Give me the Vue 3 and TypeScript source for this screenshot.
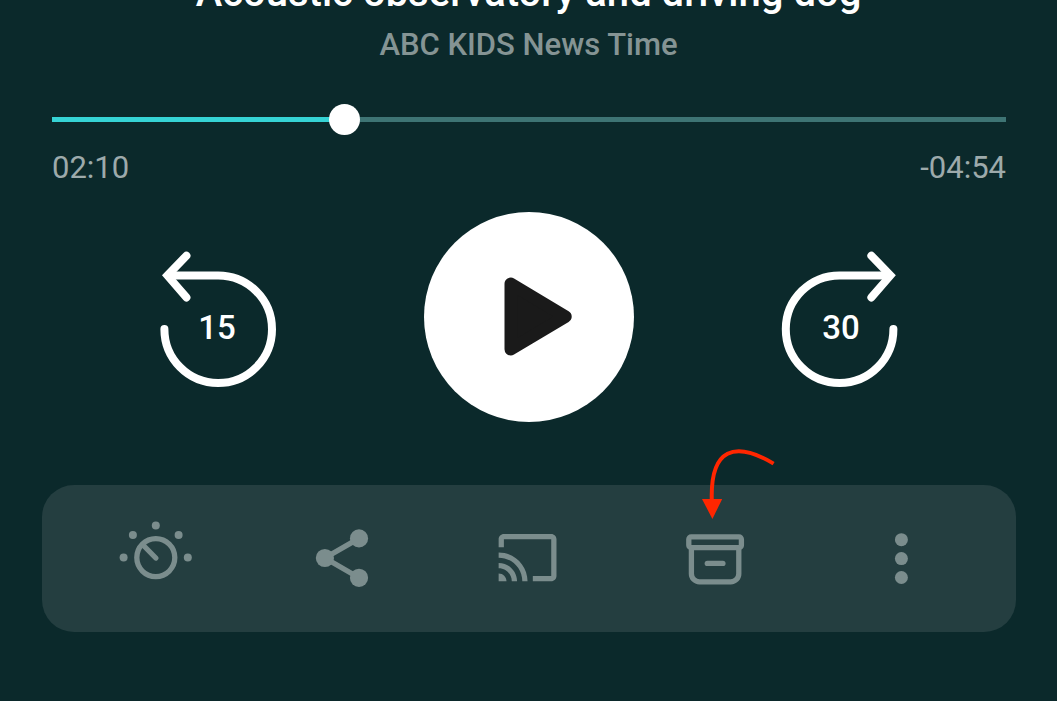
<script setup lang="ts">
import { computed, ref } from 'vue'

const duration = 424
const position = ref<number>(130)

function clock(seconds: number): string {
  const m = String(Math.floor(seconds / 60)).padStart(2, '0')
  const s = String(seconds % 60).padStart(2, '0')
  return `${m}:${s}`
}

const elapsed = computed(() => clock(position.value))
const remaining = computed(() => `-${clock(duration - position.value)}`)
const progress = computed(() => `${(position.value / duration) * 100}%`)

function skip(delta: number): void {
  position.value = Math.min(duration, Math.max(0, position.value + delta))
}
</script>

<template>
  <main class="player">
    <header class="heading">
      <h1 class="title">Acoustic observatory and driving dog</h1>
      <p class="show">ABC KIDS News Time</p>
    </header>

    <section class="timeline">
      <div class="slider">
        <div class="rail"><div class="fill" :style="{ width: progress }"></div></div>
        <input
          v-model.number="position"
          class="seek"
          type="range"
          min="0"
          :max="duration"
          aria-label="Playback position"
        />
      </div>
      <div class="times">
        <span>{{ elapsed }}</span>
        <span>{{ remaining }}</span>
      </div>
    </section>

    <section class="controls">
      <button class="skip" type="button" aria-label="Back 15 seconds" @click="skip(-15)">
        <svg width="120" height="140" viewBox="0 0 120 140">
          <g fill="none" stroke="#fff" stroke-width="8" stroke-linecap="round">
            <path d="M28.4 8.7L9.4 28.5L28.4 50.4" />
            <path d="M12 28.4H60A53.8 53.8 0 1 1 6.4 82" />
          </g>
          <text class="seconds" x="59" y="92">15</text>
        </svg>
      </button>
      <button class="play" type="button" aria-label="Play">
        <svg width="210" height="210" viewBox="0 0 210 210">
          <path
            d="M86.8 71.8V137.2L141.4 104.6Z"
            fill="#1a1a1a"
            stroke="#1a1a1a"
            stroke-width="12.6"
            stroke-linejoin="round"
          />
        </svg>
      </button>
      <button class="skip" type="button" aria-label="Forward 30 seconds" @click="skip(30)">
        <svg width="120" height="140" viewBox="0 0 120 140">
          <g fill="none" stroke="#fff" stroke-width="8" stroke-linecap="round">
            <path d="M91.4 8.7L110.4 28.5L91.4 50.4" />
            <path d="M108 28.4H60A53.8 53.8 0 1 0 113.4 82" />
          </g>
          <text class="seconds" x="61" y="92">30</text>
        </svg>
      </button>
    </section>

    <nav class="toolbar" aria-label="Episode actions">
      <button class="tool" type="button" aria-label="Sleep timer">
        <svg class="icon" viewBox="0 0 80 80">
          <circle class="line" cx="39.8" cy="38.6" r="19" />
          <path class="line" d="M39.8 39L28 27" />
          <circle cx="7.6" cy="38.6" r="4" />
          <circle cx="16.9" cy="16" r="4" />
          <circle cx="39.8" cy="6.4" r="4" />
          <circle cx="62.6" cy="16" r="4" />
          <circle cx="71.8" cy="38.6" r="4" />
        </svg>
      </button>
      <button class="tool" type="button" aria-label="Share">
        <svg class="icon" viewBox="0 0 80 80">
          <path class="line" d="M56 19.4L21.9 39L56 58.8" />
          <circle cx="56" cy="19.4" r="9.1" />
          <circle cx="21.9" cy="39" r="9.1" />
          <circle cx="56" cy="58.8" r="9.1" />
        </svg>
      </button>
      <button class="tool" type="button" aria-label="Cast">
        <svg class="icon" viewBox="0 0 80 80">
          <path
            transform="translate(7 7.1) scale(2.63)"
            d="M21 3H3c-1.1 0-2 .9-2 2v3h2V5h18v14h-7v2h7c1.1 0 2-.9 2-2V5c0-1.1-.9-2-2-2zM1 18v3h3c0-1.66-1.34-3-3-3zm0-4v2c2.76 0 5 2.24 5 5h2c0-3.87-3.13-7-7-7zm0-4v2c4.97 0 9 4.03 9 9h2c0-6.08-4.93-11-11-11z"
          />
        </svg>
      </button>
      <div class="marked">
        <button class="tool" type="button" aria-label="Archive">
          <svg class="icon" viewBox="0 0 80 80">
            <rect class="line" x="13.8" y="17.9" width="52.6" height="10.8" rx="2.4" />
            <path class="line" d="M16.4 28.6V54.8A8 8 0 0 0 24.4 62.8H55.8A8 8 0 0 0 63.8 54.8V28.6" />
            <path class="line" d="M32.3 44.4H47.9" />
          </svg>
        </button>
        <svg class="pointer" width="90" height="80" viewBox="0 0 90 80" aria-hidden="true">
          <path d="M78.6 18.6C40 -4.4 15 3 16.8 56" fill="none" stroke="#ff2600" stroke-width="4" />
          <path d="M7 54H27.2L17.4 74Z" fill="#ff2600" />
        </svg>
      </div>
      <button class="tool" type="button" aria-label="More options">
        <svg class="icon" viewBox="0 0 80 80">
          <circle cx="39.4" cy="20.7" r="6.5" />
          <circle cx="39.4" cy="39.6" r="6.5" />
          <circle cx="39.4" cy="58.5" r="6.5" />
        </svg>
      </button>
    </nav>
  </main>
</template>

<style>
html,
body {
  margin: 0;
  background: #0b292b;
}
</style>

<style scoped>
.player {
  box-sizing: border-box;
  min-height: 100vh;
  overflow: hidden;
  background: #0b292b;
  color: #fff;
  font-family: Roboto, 'Liberation Sans', sans-serif;
}

.heading {
  display: flex;
  flex-direction: column;
  gap: 12px;
  margin-top: -29px;
  text-align: center;
}

.title {
  margin: 0;
  font-size: 40px;
  line-height: 44px;
  font-weight: 500;
  white-space: nowrap;
}

.show {
  margin: 0;
  font-size: 31px;
  line-height: 36px;
  font-weight: 500;
  color: #859494;
}

.timeline {
  display: flex;
  flex-direction: column;
  gap: 15px;
  margin: 41px 51px 0 52px;
}

.slider {
  --knob: 31px;
  display: grid;
  align-items: center;
}

.rail {
  grid-area: 1 / 1;
  height: 5px;
  background: #3e7474;
}

.fill {
  height: 100%;
  background: #36d3d5;
}

.seek {
  grid-area: 1 / 1;
  height: var(--knob);
  margin: 0 calc(var(--knob) / -2);
  padding: 0;
  appearance: none;
  background: transparent;
  cursor: pointer;
}

.seek::-webkit-slider-thumb {
  appearance: none;
  width: var(--knob);
  height: var(--knob);
  border: 0;
  border-radius: 50%;
  background: #fff;
}

.times {
  display: flex;
  justify-content: space-between;
  font-size: 31px;
  line-height: 36px;
  color: #9daaab;
}

.controls {
  display: grid;
  grid-template-columns: repeat(3, 1fr);
  place-items: center;
  margin-top: 26px;
  padding: 0 62px;
}

button {
  margin: 0;
  padding: 0;
  border: 0;
  background: none;
  color: inherit;
  font: inherit;
  cursor: pointer;
}

svg {
  display: block;
}

.play {
  border-radius: 50%;
  background: #fff;
}

.seconds {
  fill: #fff;
  font-size: 33px;
  font-weight: 500;
  text-anchor: middle;
}

.toolbar {
  display: grid;
  grid-template-columns: repeat(5, 1fr);
  margin: 63px 41px 0 42px;
  padding: 0 21px;
  border-radius: 32px;
  background: #243e40;
}

.tool {
  display: flex;
  justify-content: center;
  width: 100%;
  padding: 34px 0 33px;
}

.icon {
  width: 80px;
  height: 80px;
  fill: #7b8d8d;
}

.line {
  fill: none;
  stroke: #7b8d8d;
  stroke-width: 5.3px;
  stroke-linecap: round;
}

.marked {
  position: relative;
}

.pointer {
  position: absolute;
  top: -40px;
  left: calc(50% - 20px);
  pointer-events: none;
}
</style>
